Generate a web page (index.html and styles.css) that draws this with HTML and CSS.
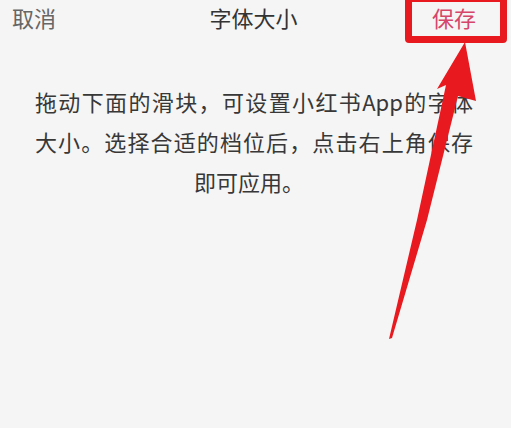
FILE: index.html
```html
<!DOCTYPE html>
<html lang="zh-CN">
<head>
<meta charset="utf-8">
<link rel="stylesheet" href="styles.css">
</head>
<body>
<div class="page">
  <header class="nav">
    <span class="nav-cancel">取消</span>
    <span class="nav-title">字体大小</span>
    <span class="nav-save">保存</span>
  </header>
  <section class="intro">
    <p class="line justify">拖动下面的滑块，可设置小红书App的字体</p>
    <p class="line justify">大小。选择合适的档位后，点击右上角保存</p>
    <p class="line last">即可应用。</p>
  </section>
  <div class="highlight-box"></div>
  <svg class="arrow" width="511" height="428" viewBox="0 0 511 428" xmlns="http://www.w3.org/2000/svg">
    <polygon points="465,42 476,101 458,96 427,220 392,338 389,339 417,220 446,85 437,89" fill="#e8191f"/>
  </svg>
</div>
</body>
</html>
```

FILE: styles.css
```css
* { box-sizing: border-box; }
html, body {
  margin: 0;
  padding: 0;
  background: #f5f5f5;
}
.page {
  position: relative;
  width: 511px;
  height: 428px;
  overflow: hidden;
  background: #f5f5f5;
  font-family: "Noto Sans CJK SC", "Noto Sans", sans-serif;
}
.nav {
  display: grid;
  grid-template-columns: 1fr auto 1fr;
  align-items: center;
  height: 34px;
  line-height: 34px;
  font-size: 22px;
}
.nav-cancel {
  justify-self: start;
  padding-left: 12px;
  color: #666666;
}
.nav-title {
  color: #333333;
  padding-right: 4px;
}
.nav-save {
  justify-self: end;
  padding-right: 35px;
  color: #d6456a;
}
.intro {
  margin-top: 47px;
  padding: 0 38px 0 35px;
  color: #383838;
  font-size: 22px;
  line-height: 40px;
}
.line {
  margin: 0;
  white-space: nowrap;
}
.justify {
  text-align: justify;
  text-align-last: justify;
}
.last {
  text-align: center;
  padding-right: 10px;
}
.highlight-box {
  position: absolute;
  left: 405px;
  top: -5px;
  width: 102px;
  height: 48px;
  border: 7px solid #e8191f;
  border-radius: 4px;
}
.arrow {
  position: absolute;
  left: 0;
  top: 0;
}
```
